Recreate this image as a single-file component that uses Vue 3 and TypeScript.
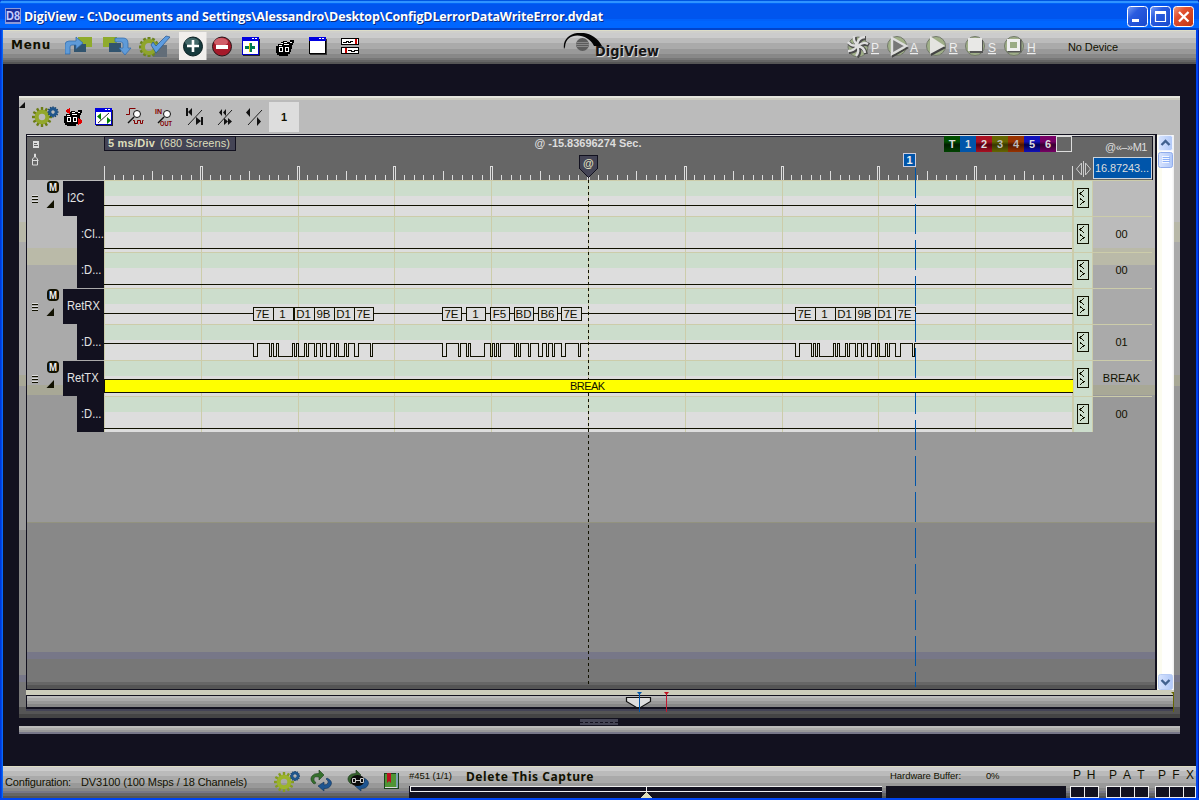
<script setup lang="ts">
import type { Directive } from 'vue'

// Spreads the letters of a label so that it takes the given width in pixels.
const vFit: Directive<HTMLElement, number> = {
  mounted(el, { value }) {
    const n = (el.textContent ?? '').trim().length
    const w = el.getBoundingClientRect().width
    el.style.letterSpacing = `${(value - w) / n}px`
  },
}

interface Row { name: string; kind: 'bus' | 'line'; value: string }
const rows: Row[] = [
  { name: 'I2C', kind: 'bus', value: '' },
  { name: ':Cl...', kind: 'line', value: '00' },
  { name: ':D...', kind: 'line', value: '00' },
  { name: 'RetRX', kind: 'bus', value: '' },
  { name: ':D...', kind: 'line', value: '01' },
  { name: 'RetTX', kind: 'bus', value: 'BREAK' },
  { name: ':D...', kind: 'line', value: '00' },
]
const gridX = [104, 201, 298, 394, 491, 588, 685, 782, 878, 975, 1072].map(x => x - 104)

interface Tick { x: number; y: number }
const ticks: Tick[] = []
for (let i = 0; i <= 100; i++) {
  if (i % 10 === 0) continue
  ticks.push({ x: Math.round(i * 9.68), y: i % 5 === 0 ? -3 : 1 })
}

interface Frame { x: number; w: number; t: string }
const frames: Frame[] = [
  ...['7E', '1', 'D1', '9B', 'D1', '7E'].map((t, i) => ({ x: [253, 273, 294, 314, 334, 354][i], w: i === 5 ? 19 : 20, t })),
  ...['7E', '1', 'F5', 'BD', 'B6', '7E'].map((t, i) => ({ x: [442, 466, 490, 514, 538, 561][i], w: i === 5 ? 20 : 19, t })),
  ...['7E', '1', 'D1', '9B', 'D1', '7E'].map((t, i) => ({ x: [795, 815, 835, 855, 875, 895][i], w: 20, t })),
]
const edges = [
  253, 257, 269, 271, 273, 276, 278, 292, 294, 296, 298, 304, 306, 308, 314, 316, 320, 322, 326, 330, 334, 336, 338, 344, 346, 348, 354, 358, 370, 372,
  442, 446, 458, 460, 466, 468, 470, 484, 490, 492, 494, 496, 498, 500, 514, 516, 518, 520, 528, 530, 538, 542, 546, 548, 552, 554, 561, 565, 578, 580,
  795, 799, 811, 813, 815, 817, 819, 833, 835, 837, 839, 845, 847, 849, 855, 857, 861, 863, 867, 871, 875, 877, 879, 885, 887, 889, 895, 900, 912, 914,
]
let wave = 'M0 163.5'
edges.forEach((x, i) => {
  wave += `H${x - 103.5}V${i % 2 === 0 ? 176.5 : 163.5}`
})
wave += 'H968'

const tabs = ['T', '1', '2', '3', '4', '5', '6']
const teeth = Array.from({ length: 12 }, (_, i) => i * 30)
</script>

<template>
  <div class="window">
    <header class="title">
      <svg class="appicon" width="16" height="16"><rect width="16" height="16" fill="#8d9ad8" /><rect x="1" y="1" width="14" height="13" fill="#1c2f9c" /><text x="1" y="12" font-size="12" font-weight="bold" fill="#c4ccff" textLength="14" lengthAdjust="spacingAndGlyphs">D8</text></svg>
      <span class="caption"><span v-fit="579">DigiView - C:\Documents and Settings\Alessandro\Desktop\ConfigDLerrorDataWriteError.dvdat</span></span>
      <svg class="winbtns" width="67" height="21">
        <defs>
          <linearGradient id="bb" x1="0" y1="0" x2="1" y2="1"><stop offset="0" stop-color="#7da0f5" /><stop offset=".35" stop-color="#2a5ce0" /><stop offset="1" stop-color="#1848cc" /></linearGradient>
          <linearGradient id="rb" x1="0" y1="0" x2="1" y2="1"><stop offset="0" stop-color="#f0a080" /><stop offset=".35" stop-color="#e25030" /><stop offset="1" stop-color="#c03410" /></linearGradient>
        </defs>
        <rect x=".5" y=".5" width="20" height="20" rx="3" fill="url(#bb)" stroke="#fff" />
        <rect x="23.500" y=".5" width="20" height="20" rx="3" fill="url(#bb)" stroke="#fff" />
        <rect x="46.500" y=".5" width="20" height="20" rx="3" fill="url(#rb)" stroke="#fff" />
        <rect x="5" y="13" width="7" height="3" fill="#fff" />
        <path d="M28.500 6v9.500h10V6M28 6.500h11" fill="none" stroke="#fff" stroke-width="1.200" /><rect x="28" y="5" width="11" height="3" fill="#fff" />
        <path d="M52 6l9.500 9.500M61.500 6L52 15.500" stroke="#fff" stroke-width="2.300" />
      </svg>
    </header>

    <nav class="mainbar">
      <span class="menu"><span v-fit="40">Menu</span></span>
      <svg class="tools" width="300" height="30" font-weight="bold">
        <!-- undo and redo style arrows -->
        <rect x="13" y="7" width="14" height="10" fill="#8fab2c" /><rect x="9" y="14" width="12" height="8" fill="#31546f" />
        <path d="M0 24V15q0-4 4-4h7V7l7 6-7 6v-4H7q-2 0-2 2v7z" fill="#5f9bd8" stroke="#2f69ab" stroke-width=".7" />
        <rect x="38" y="7" width="14" height="10" fill="#8fab2c" /><rect x="44" y="13" width="12" height="9" fill="#31546f" />
        <path d="M50 8h8q5 0 5 5v5h3l-6 7-6-7h4v-4q0-2-2-2h-6z" fill="#5f9bd8" stroke="#2f69ab" stroke-width=".7" />
        <!-- gear with a check -->
        <rect x="88" y="15" width="14" height="12" fill="#626d78" />
        <g transform="translate(84 17)"><rect v-for="a in teeth" :key="a" x="-1.500" y="-10" width="3" height="5" fill="#6c8420" :transform="`rotate(${a})`" /><circle r="6" fill="none" stroke="#8fa52c" stroke-width="4" /></g>
        <path d="M86 15l5 8L105 7l-4-1-10 10-3-4z" fill="#5d9ce0" stroke="#25558c" stroke-width=".7" />
        <!-- add -->
        <rect x="114" y="2" width="27.500" height="28" fill="#f1efec" /><circle cx="128" cy="16.500" r="9.500" fill="#173b3d" stroke="#0b2022" /><ellipse cx="127" cy="12" rx="7" ry="4" fill="#638889" opacity=".6" /><path d="M122 16h12M128 10v12" stroke="#fff" stroke-width="2.600" />
        <!-- remove -->
        <circle cx="157" cy="16.500" r="9.500" fill="#a51a2a" stroke="#281418" /><ellipse cx="156" cy="12" rx="7" ry="4" fill="#ee8c94" opacity=".6" /><rect x="151" y="15" width="12" height="4" fill="#fff" />
        <!-- new window -->
        <g shape-rendering="crispEdges"><rect x="178" y="9" width="17" height="17" fill="#222" /><rect x="177.500" y="7.500" width="16" height="17" fill="#fff" stroke="#0000c8" /><rect x="177" y="7" width="17" height="4" fill="#0000e0" /><path d="M187 8h2v1h-2zM190 8h2v1h-2z" fill="#fff" /><path d="M184 13h3v3h3v3h-3v3h-3v-3h-4v-3h4z" fill="#007a50" /><rect x="184" y="13" width="1" height="9" fill="#d8d000" /></g>
        <!-- binoculars -->
        <g shape-rendering="crispEdges"><path d="M213 14h3v-2h2v-1h4v1h3v-2h4v3h-1v2h-1v4h-1v3h-1v2h-2v2h-9v-1h-2v-2h-1v-7h2z" fill="#000" /><path d="M216 13h2v1h-2zM219 12h3v1h-3zM214 15h3v1h-3zM219 14h5v1h-5zM225 12h2v1h-2z" fill="#fff" /><rect x="214.500" y="17.500" width="3" height="4" fill="none" stroke="#fff" /><rect x="220.500" y="17.500" width="3" height="4" fill="none" stroke="#fff" /></g>
        <!-- blank window -->
        <g shape-rendering="crispEdges"><rect x="245" y="9" width="17" height="16" fill="#333" /><rect x="244.500" y="7.500" width="16" height="16" fill="#fff" stroke="#000" /><rect x="244" y="7" width="17" height="4" fill="#0000e0" /><path d="M254 8h2v1h-2zM257 8h2v1h-2z" fill="#fff" /></g>
        <!-- linked traces -->
        <g shape-rendering="crispEdges"><rect x="276.500" y="8.500" width="17" height="6" fill="#fff" stroke="#000" /><rect x="276.500" y="17.500" width="17" height="6" fill="#fff" stroke="#000" /><path d="M278 12.500h3v-1h2v1h2v-1h3M283 20.500h3v1h3v-1h4" stroke="#000" fill="none" /><path d="M290 9h2v5h-2zM280 18h2v5h-2z" fill="#c80000" /></g>
      </svg>
      <svg class="logo" width="104" height="30">
        <circle cx="19.500" cy="11.500" r="6.500" fill="#5c5c5c" /><path d="M14 9.500h11M13 11.500h13M14 13.500h11" stroke="#888" />
        <path d="M1 16C-2 -3 29 -7 39 13h-8C25 0 3 -2 2 14z" fill="#050505" />
        <text x="33" y="23.500" font-family="DejaVu Sans" font-weight="bold" font-size="13.500" fill="#ddd" textLength="64" lengthAdjust="spacingAndGlyphs">DigiView</text>
        <text x="32" y="22.500" font-family="DejaVu Sans" font-weight="bold" font-size="13.500" fill="#151515" textLength="64" lengthAdjust="spacingAndGlyphs">DigiView</text>
      </svg>
      <svg class="runbtns" width="192" height="28" font-size="13">
        <g fill="#9fae88" stroke="#73796b"><circle cx="11" cy="13" r="10" /><circle cx="50" cy="12" r="9.500" /><circle cx="89" cy="12" r="9.500" /><circle cx="128" cy="12" r="9.500" /><circle cx="167" cy="12" r="9.500" /></g>
        <path d="M2 9q4 5 9 3M8 3q-1 6 4 9M19 4q-7 0-8 8M22 11q-5-3-10 2M19 20q-1-6-7-7M10 23q4-5 1-10M2 18q6 0 9-5" fill="none" stroke="#4c4c4c" stroke-width="4" /><path d="M1 8q4 5 9 3M7 2q-1 6 4 9M18 3q-7 0-8 8M21 10q-5-3-10 2M18 19q-1-6-7-7M9 22q4-5 1-10M1 17q6 0 9-5" fill="none" stroke="#dedede" stroke-width="2.400" />
        <path d="M46 5l14 9-14 8z" fill="none" stroke="#444" stroke-width="2" /><path d="M45 4l14 8-14 8z" fill="#777" stroke="#ddd" stroke-width="2.400" />
        <path d="M84 3l15 11-15 8" fill="#444" /><path d="M83 2l15 10-15 8z" fill="#e4e4e0" />
        <path d="M122 6h14v13h-13z" fill="#555" /><rect x="121" y="4" width="14" height="13" fill="#e8e8e6" />
        <rect x="162" y="7" width="11" height="10" fill="none" stroke="#555" stroke-width="3" /><rect x="161.500" y="6.500" width="10" height="9" fill="#9aab85" stroke="#eee" stroke-width="3" />
        <g fill="#eee" text-decoration="underline" font-size="12"><text x="24" y="18" textLength="8">P</text><text x="63" y="18" textLength="8">A</text><text x="102" y="18" textLength="8">R</text><text x="141" y="18" textLength="7">S</text><text x="180" y="18" textLength="8">H</text></g>
      </svg>
      <span class="device"><span v-fit="50">No Device</span></span>
    </nav>

    <main class="panel">
      <div class="viewbar">
        <svg width="250" height="38" class="viewtools">
          <g transform="translate(22 21)"><rect v-for="a in teeth" :key="a" x="-1.200" y="-10" width="2.400" height="5" fill="#6b7c12" :transform="`rotate(${a})`" /><circle r="5.300" fill="none" stroke="#93a82c" stroke-width="4" /></g>
          <g transform="translate(33 16)"><rect v-for="a in teeth" :key="a" x="-.7" y="-5.500" width="1.500" height="3" fill="#173f68" :transform="`rotate(${a})`" /><circle r="3.200" fill="none" stroke="#20568c" stroke-width="3" /></g>
          <g transform="translate(-167 4)" shape-rendering="crispEdges"><path d="M213 14h3v-2h2v-1h4v1h3v-2h4v3h-1v2h-1v4h-1v3h-1v2h-2v2h-9v-1h-2v-2h-1v-7h2z" fill="#000" /><path d="M219 12h3v1h-3zM214 15h3v1h-3zM219 14h5v1h-5zM225 12h2v1h-2z" fill="#fff" /><rect x="214.500" y="17.500" width="3" height="4" fill="none" stroke="#fff" /><rect x="220.500" y="17.500" width="3" height="4" fill="none" stroke="#fff" /><path d="M217 8v6h-1v-1h-2v-1h-1v-2h1v-1h2v-1zM225 18h1v1h2v1h1v3h-1v1h-2v1h-1z" fill="#e00000" /></g>
          <g shape-rendering="crispEdges"><rect x="76" y="14" width="17" height="16" fill="#222" /><rect x="75.500" y="12.500" width="16" height="16" fill="#fff" stroke="#0000c8" /><rect x="75" y="12" width="17" height="4" fill="#0000e0" /><path d="M85 13h2v1h-2zM88 13h2v1h-2z" fill="#fff" /></g>
          <path d="M78 27l11-10" stroke="#333" /><path d="M81 17v7l-4-3.500zM87 21v7l4-3.500z" fill="#008000" />
          <path d="M106 18.500h3.500v-6h6M113 24.500h1.500v3h3v-3h3v3h2v-3h1" fill="none" stroke="#820000" /><path d="M114 21l-6 6" stroke="#111" stroke-width="1.500" /><circle cx="117" cy="18" r="3.500" fill="#fff" stroke="#111" />
          <text x="135" y="18" font-size="7.500" font-weight="bold" fill="#820000" textLength="7" lengthAdjust="spacingAndGlyphs">IN</text><text x="140" y="30" font-size="7" font-weight="bold" fill="#820000" textLength="12" lengthAdjust="spacingAndGlyphs">OUT</text><path d="M144 21l-6 6" stroke="#111" stroke-width="1.500" /><circle cx="147" cy="18" r="3.500" fill="#fff" stroke="#111" />
          <path d="M168 29l14-15M198 29l14-15M228 29l14-15" stroke="#222" /><path d="M166 12h2v8h-2zM172 12v8l-4-4zM181 21h2v8h-2zM176 21v8l5-4zM202 13v7l-3-3.500zM206 13v7l-3-3.500zM204 22v7l4-3.500zM208 22v7l4-3.500zM230 12v9l-4-4.500zM237 21v9l4-4.500z" fill="#111" />
          <path d="M5 6v6h-6z" fill="#111" />
        </svg>
        <button class="page">1</button>
      </div>

      <div class="viewer">
        <section class="view">
          <div class="ruler">
            <svg width="77" height="44" class="corner"><rect x="6" y="5" width="6" height="7" fill="#ddd" /><path d="M7 7.500h3M7 9.500h4" stroke="#666" /><path d="M5.500 29v-6l2-2v-3h1v3l2 2v6zM5.500 24.500h6" fill="none" stroke="#ddd" /></svg>
            <div class="scale">
              <div class="div"><b v-fit="47">5 ms/Div</b><span v-fit="70">(680 Screens)</span></div>
              <svg width="969" height="44" shape-rendering="crispEdges">
                <g stroke="#ddd" fill="none">
                  <path v-for="t in ticks" :key="t.x" :d="`M${t.x + .5} ${t.y + 38}V44`" />
                  <path v-for="x in gridX.slice(1, 10)" :key="x" :d="`M${x - .5} 44V30.500h2V44`" />
                  <path d="M.5 30V44M968.500 30V44" />
                </g>
                <text x="430.500" y="11" font-size="11" font-weight="bold" fill="#ddd" textLength="107">@ -15.83696274 Sec.</text>
                <path d="M475.500 19.500h18v13l-9 9-9-9z" fill="#444455" stroke="#12111f" />
                <text x="479" y="31" font-size="11" font-weight="bold" fill="#ddddbb" textLength="11">@</text>
                <rect x="799.500" y="17.500" width="12" height="13" fill="#0055aa" stroke="#ccd" />
                <text x="802.500" y="28" font-size="11" font-weight="bold" fill="#eee">1</text>
              </svg>
              <div class="tabs"><span v-for="(t, i) in tabs" :key="t" :class="['tab', 'c' + i]">{{ t }}</span><span class="tab empty"></span></div>
            </div>
            <svg class="pan" width="20" height="44"><path d="M8.500 27v12l-5-6zM12.500 27v12l5-6zM10.500 25v16" fill="none" stroke="#ccc" /></svg>
            <div class="delta"><span class="dlabel"><span v-fit="42">@«–»M1</span></span><span class="dval"><span v-fit="54">16.87243...</span></span></div>
          </div>

          <div class="body">
            <div class="names">
              <div v-for="(r, i) in rows" :key="i" class="row">
                <svg v-if="r.kind === 'bus'" class="handle" width="36" height="30">
                  <g shape-rendering="crispEdges"><path d="M5 16.500h6M5 19.500h6M5 22.500h6" stroke="#111100" /><path d="M5 15.500h6M5 18.500h6M5 21.500h6" stroke="#ddd" /></g>
                  <path d="M27 20v8h-7.500z" fill="#111100" /><rect x="20" y="1" width="12" height="12" rx="4" fill="#111100" /><text x="22" y="11" font-size="10" fill="#eee" font-weight="bold" textLength="8" lengthAdjust="spacingAndGlyphs">M</text>
                </svg>
                <div :class="['name', r.kind]"><span>{{ r.name }}</span></div>
              </div>
            </div>
            <svg class="plot" width="969" height="252" shape-rendering="crispEdges">
              <g v-for="(r, i) in rows" :key="i">
                <rect x="0" :y="i * 36" width="969" height="36" fill="#dddddd" /><rect x="0" :y="i * 36 + 1" width="969" height="15" fill="#ccddcc" /><rect x="0" :y="i * 36" width="969" height="1" fill="#ccccaa" />
              </g>
              <path v-for="x in gridX" :key="x" :d="`M${x + .5} 0V252`" stroke="#ccccaa" />
              <path d="M0 25.500H969M0 68.500H968M0 104.500H968M0 133.500H969M0 248.500H968" stroke="#111100" />
              <g v-for="f in frames" :key="f.x">
                <rect :x="f.x - 103.500" y="127.500" :width="f.w" height="13" fill="#dddddd" stroke="#111100" />
                <text :x="f.x - 104 + 9.500" y="138" font-size="11.500" text-anchor="middle" fill="#111100">{{ f.t }}</text>
              </g>
              <path :d="wave" fill="none" stroke="#111100" />
              <rect x=".5" y="199.500" width="968" height="13" fill="#ffff00" stroke="#111100" />
              <rect x="968" y="200" width="1" height="12" fill="#ffff00" />
            </svg>
            <div class="snaps">
              <div v-for="(r, i) in rows" :key="i" class="snap">
                <svg width="12" height="20" shape-rendering="crispEdges"><rect x=".5" y=".5" width="11" height="19" fill="none" stroke="#111100" /><path d="M7 2.500L3 5.500l4 3.500M3 10.500l4 3-4 3.500" fill="none" stroke="#111100" /></svg>
              </div>
            </div>
            <div class="values">
              <div v-for="(r, i) in rows" :key="i" class="value">{{ r.value }}</div>
            </div>
          </div>
          <svg class="cursors" width="969" height="523" shape-rendering="crispEdges">
            <path d="M484.500 16V215M484.500 229V523" stroke="#111100" stroke-dasharray="3 3" />
            <path d="M811.500 4V215" stroke="#0055aa" stroke-dasharray="30 6" />
            <path d="M811.500 229V523" stroke="#0055aa" stroke-dasharray="30 6" stroke-dashoffset="9" />
            <text x="466" y="226" font-size="11" fill="#111100" textLength="35">BREAK</text>
          </svg>
        </section>
        <aside class="scroll">
          <svg width="17" height="34"><defs><linearGradient id="sb"><stop offset="0" stop-color="#d8e4fe" /><stop offset="1" stop-color="#b0c8f8" /></linearGradient></defs><rect x="1.500" y=".5" width="14" height="15" rx="2" fill="url(#sb)" stroke="#eef3ff" /><path d="M4.500 10l4-4 4 4" fill="none" stroke="#41618f" stroke-width="2.400" /><rect x="1.500" y="17.500" width="14" height="15" rx="2" fill="url(#sb)" stroke="#90acec" /><path d="M5 21.500h7M5 23.500h7M5 25.500h7M5 27.500h7" stroke="#f4f8ff" /><path d="M6 22.500h7M6 24.500h7M6 26.500h7" stroke="#8cb0f8" /></svg>
          <svg width="17" height="16"><rect x="1.500" y=".5" width="14" height="15" rx="2" fill="url(#sb)" stroke="#b8ccf4" /><path d="M4.500 6l4 4 4-4" fill="none" stroke="#41618f" stroke-width="2.400" /></svg>
        </aside>
      </div>

      <div class="overview">
        <div class="track"></div>
        <svg width="1148" height="24" class="pins"><path d="M600.500 6.500h24v4l-10 6h-4l-10-6z" fill="#ddd" stroke="#111" stroke-width="1.200" /><path d="M613.500 2V21" stroke="#0055aa" /><path d="M611 1h5l-2.500 3z" fill="#0055aa" /><path d="M640.500 2V21" stroke="#c01830" /><path d="M638 1h5l-2.500 3z" fill="#c01020" /><path d="M1147.500 2V21" stroke="#666600" /><path d="M1145 1h3v3z" fill="#666600" /></svg>
      </div>
    </main>

    <div class="splitter"><svg width="39" height="6"><rect width="38" height="6" fill="#444455" /><path d="M0 3.500h39" stroke="#12111f" stroke-dasharray="3 2" /></svg></div>
    <div class="lowerbar"></div>

    <footer class="status">
      <span class="cfg1"><span v-fit="66">Configuration:</span></span>
      <span class="cfg2"><span v-fit="166">DV3100 (100 Msps / 18 Channels)</span></span>
      <svg class="sicons" width="130" height="32">
        <g transform="translate(11 16)"><rect v-for="a in teeth" :key="a" x="-1.200" y="-10" width="2.400" height="5" fill="#859c20" :transform="`rotate(${a})`" /><circle r="5.300" fill="none" stroke="#9cb42c" stroke-width="4" /></g>
        <g transform="translate(22 10)"><rect v-for="a in teeth" :key="a" x="-.7" y="-5" width="1.500" height="3" fill="#173f68" :transform="`rotate(${a})`" /><circle r="3" fill="none" stroke="#20568c" stroke-width="2.600" /></g>
        <path d="M41 18q-5-4-2-8 2-3 7-2.500V4l5 5-5 5v-3q-4-1-5 1-1 2 2 5z" fill="#35702c" stroke="#1c3e1c" stroke-width=".6" /><path d="M54 12q6 3 4 7-2 4-7 3.500V25l-6-5 6-4v3q3 0 4-2 1-2-2-4z" fill="#1f5590" stroke="#123458" stroke-width=".6" />
        <g transform="translate(37 0)"><path d="M41 18q-5-4-2-8 2-3 7-2.500V4l5 5-5 5z" fill="#35602c" stroke="#1c3e1c" stroke-width=".6" /><path d="M54 12q6 3 4 7-2 4-7 3.500V25l-6-5 6-4z" fill="#1f5590" stroke="#123458" stroke-width=".6" /><ellipse cx="47.500" cy="14.500" rx="7" ry="5.500" fill="#0b0b0b" /><path d="M42.500 12.500h3v4h-3zM50.500 12.500h3v4h-3zM46 14.500h4" fill="none" stroke="#ccc" /></g>
        <rect x="111.500" y="7.500" width="14" height="15" fill="#4f9434" stroke="#1b431c" /><path d="M124 7v15" stroke="#7ba0b0" stroke-width="2" /><path d="M112 21.500h12" stroke="#ddd" /><path d="M114 7h4v10l-2-2-2 2z" fill="#bb1020" />
      </svg>
      <div class="capture">
        <div class="caprow"><span class="num"><span v-fit="43">#451 (1/1)</span></span><b class="del"><span v-fit="128">Delete This Capture</span></b></div>
        <svg width="473" height="12" shape-rendering="crispEdges"><rect width="473" height="12" fill="#12111f" /><path d="M473 .5H1.500v5H473" fill="none" stroke="#eee" /><path d="M237.500 0v6" stroke="#eee" /><path d="M237 6h1l5 6h-12z" fill="#ddddbb" /></svg>
      </div>
      <div class="buffer">
        <div class="bufrow"><span v-fit="71">Hardware Buffer:</span><span v-fit="13">0%</span></div>
        <div class="bufbar"></div>
      </div>
      <div class="leds">
        <div class="ledset"><div class="led"><span>P</span><i></i></div><div class="led"><span>H</span><i></i></div></div>
        <div class="ledset"><div class="led"><span>P</span><i></i></div><div class="led"><span>A</span><i></i></div><div class="led"><span>T</span><i></i></div></div>
        <div class="ledset last"><div class="led"><span>P</span><i></i></div><div class="led"><span>F</span><i></i></div><div class="led"><span>X</span><i></i></div></div>
      </div>
    </footer>
  </div>
</template>

<style>
body { margin: 0; background: #fff; overflow: hidden; }
</style>

<style scoped>
.window { box-sizing: border-box; width: 1199px; height: 800px; background: linear-gradient(90deg, #0038d8 0 1px, #0048e8 1px 2px, #0868f8 2px 3px, transparent 3px 1196px, #0044ee 1196px 1198px, #0020a8 1198px) #12111f; border-bottom: 2px solid #0044f0; display: flex; flex-direction: column; font-family: "Liberation Sans", Arial, sans-serif; font-size: 11px; color: #111100; position: relative; overflow: hidden; }
.window * { box-sizing: border-box; }
svg { display: block; flex: none; }
.window span { white-space: nowrap; }

.title { height: 30px; flex: none; background: linear-gradient(#0055e0 0 1px, #2f94ff 1px 3px, #0064f8 3px 4px, #0055ee 4px 19px, #0061fa 19px 21px, #0066ff 21px 28px, #0044cc 28px); display: flex; align-items: flex-start; padding: 6px 5px 0; border-radius: 4px 4px 0 0; }
.appicon { margin: 2px 0 0; }
.caption { margin-left: 3px; flex: 1; font: bold 12.500px/22px "Open Sans", "Noto Sans", sans-serif; color: #fff; text-shadow: 1px 1px 0 #0a2a80; }
.caption > span { display: inline-block; }

.mainbar { height: 34px; flex: none; margin: 0 3px; display: flex; align-items: flex-start; background: linear-gradient(#ddddc8 0 1px, #d0d0cc 1px 3px, #cccccc 3px 8px, #bbbbbb 8px 13px, #aaaaaa 13px 19px, #999999 19px 24px, #888888 24px 28px, #777777 28px 30px, #666 30px 32px, #555555 32px); }
.menu { padding-left: 8px; width: 62px; font: bold 12px/31px "DejaVu Sans", sans-serif; }
.menu > span, .device > span, .div > *, .dlabel > span, .dval > span, .cfg1 > span, .cfg2 > span, .num > span, .del > span, .bufrow > span { display: inline-block; }
.logo { margin: 3px 0 0 198px; }
.runbtns { margin: 4px 0 0 180px; }
.device { margin-left: 29px; line-height: 34px; }

.panel { margin: 32px 0 0 19px; width: 1161px; height: 622px; flex: none; padding-left: 7px; background: linear-gradient(#e4e4dc 0 2px, #ccccc0 2px 4px, #bbbbbb 4px 126px, #b8b8a8 126px 146px, #aaaaaa 146px 279px, #a8a896 279px 290px, #999999 290px 434px, #888888 434px 579px, #777788 579px 586px, #777777 586px 611px, #555555 611px 618px, #444444 618px); }
.viewbar { height: 38px; display: flex; align-items: flex-start; }
.viewtools { margin: 0 1px 0 -6px; width: 248px; overflow: visible; }
.page { border: 0; padding: 0; background: #dddddd; width: 30px; height: 30px; margin-top: 6px; font: bold 11px/30px "Liberation Sans", sans-serif; color: #111100; }

.viewer { display: flex; height: 556px; }
.view { position: relative; width: 1131px; height: 556px; border: solid #12111f; border-width: 1px 2px 1px 1px; background: linear-gradient(#bbbbbb 0 113px, #babaa8 113px 130px, #aaaaaa 130px 250px, #a8a896 250px 260px, #999999 260px 387px, #92927f 387px 388px, #888888 388px 517px, #777788 517px 524px, #777777 524px 547px, #666666 547px 550px, #555555 550px); }
.ruler { display: flex; height: 44px; margin: 1px 2px 0 0; background: #666666; border-top: 1px solid #222230; box-shadow: 0 -1px 0 #ddd; border-right: 1px solid #12111f; }
.ruler > * { margin-top: -1px; }
.scale { position: relative; width: 969px; }
.div { position: absolute; left: 0; top: 0; width: 132px; height: 15px; background: #444455; border: 1px solid #12111f; color: #ddddbb; line-height: 13px; padding-left: 3px; display: flex; gap: 5px; z-index: 1; }
.tabs { position: absolute; left: 840px; top: 0; display: flex; }
.tab { width: 16px; height: 16px; font: bold 11px/16px "Liberation Sans", sans-serif; text-align: center; color: #ddd; }
.c0 { background: linear-gradient(#004d00 35%, #001c00 55%, #004400); }
.c1 { background: #0055aa; }
.c2 { background: linear-gradient(#aa1122 35%, #550010 55%, #aa1122); }
.c3 { background: linear-gradient(#666600 35%, #383800 55%, #666600); color: #bbb; }
.c4 { background: linear-gradient(#993300 35%, #501800 55%, #993300); color: #bbb; }
.c5 { background: linear-gradient(#1111bb 35%, #000050 55%, #1111bb); }
.c6 { background: linear-gradient(#770066 35%, #380030 55%, #770066); }
.empty { border: 1px solid #ddd; }
.delta { width: 60px; display: flex; flex-direction: column; }
.dlabel { padding-left: 12px; line-height: 22px; height: 21px; color: #ddd; }
.dval { height: 22px; border: 1px solid #ccd4dd; background: #0055aa; color: #ddd; line-height: 20px; padding-left: 1px; width: 59px; }

.body { display: flex; height: 252px; }
.names { width: 77px; }
.row { height: 36px; position: relative; display: flex; justify-content: flex-end; }
.handle { margin-right: auto; }
.name { background: #12111f; color: #e4e4e4; font-size: 12px; padding: 0 0 0 4px; height: 35px; margin-top: 1px; line-height: 35px; }
.name.bus { width: 41px; }
.name.line { width: 27px; height: 36px; margin-top: 0; line-height: 36px; overflow: hidden; }
.name > span { display: block; transform-origin: 0 50%; transform: scaleX(.93); }
.snaps { width: 20px; background: #ccddcc; border-right: 1px solid #ccccaa; border-left: 1px solid #ccccaa; }
.snap { height: 36px; border-top: 1px solid #ccccaa; padding: 7px 0 0 3px; }
.values { width: 59px; }
.value { height: 36px; border-top: 1px solid #ccccaa; text-align: center; line-height: 35px; padding-right: 2px; }
.cursors { position: absolute; left: 77px; top: 29px; }
.scroll { width: 17px; height: 555px; margin-top: 1px; background: linear-gradient(90deg, #fcfcf0 0 5px, #ffffff 5px 15px, #ececec); display: flex; flex-direction: column; justify-content: space-between; }

.overview { position: relative; height: 28px; padding-top: 1px; background: linear-gradient(#ccccbb 0 5px, #444455 5px 21px, transparent 21px); width: 1148px; }
.track { margin-top: 4px; height: 14px; border: 1px solid #12111f; border-bottom-width: 2px; background: linear-gradient(#bbbbbb 0 2px, #aaaaaa 2px 5px, #999999 5px 8px, #888888 8px); }
.pins { position: absolute; left: 0; top: 1px; overflow: visible; }

.splitter { height: 8px; padding: 1px 0 0 580px; flex: none; }
.lowerbar { height: 8px; width: 1161px; margin-left: 19px; flex: none; background: linear-gradient(#bbbbbb 0 2px, #aaaaaa 2px 4px, #999999 4px 6px, #777788 6px); }

.status { height: 32px; flex: none; margin: 32px 3px 0; display: flex; background: linear-gradient(#ddddc4 0 1px, #cccccc 1px 5px, #bbbbbb 5px 10px, #aaaaaa 10px 17px, #999999 17px 22px, #888888 22px 25px, #777788 25px 27px, #666666 27px 30px, #555555 30px); }
.cfg1 { margin-left: 2px; line-height: 33px; width: 76px; flex: none; }
.cfg2 { line-height: 33px; width: 192px; flex: none; }
.sicons { margin-right: 6px; }
.capture { width: 473px; flex: none; }
.caprow { height: 20px; display: flex; align-items: flex-start; }
.num { font-size: 9.500px; line-height: 19px; width: 57px; }
.del { font: bold 12px/21px "Noto Sans", sans-serif; }
.buffer { width: 180px; margin-left: 4px; flex: none; }
.bufrow { height: 20px; line-height: 20px; font-size: 9.500px; padding-left: 4px; display: flex; gap: 25px; }
.bufbar { height: 12px; background: #12111f; }
.leds { display: flex; margin-left: 4px; gap: 8px; flex: none; }
.ledset { display: flex; }
.ledset.last { margin-left: -1px; }
.led { width: 14px; }
.led span { display: block; height: 20px; font-size: 12px; line-height: 18px; text-align: center; }
.led i { display: block; width: 15px; height: 12px; background: #12111f; border: 1px solid #eee; }
.last .led:last-child i { width: 13px; }
</style>
